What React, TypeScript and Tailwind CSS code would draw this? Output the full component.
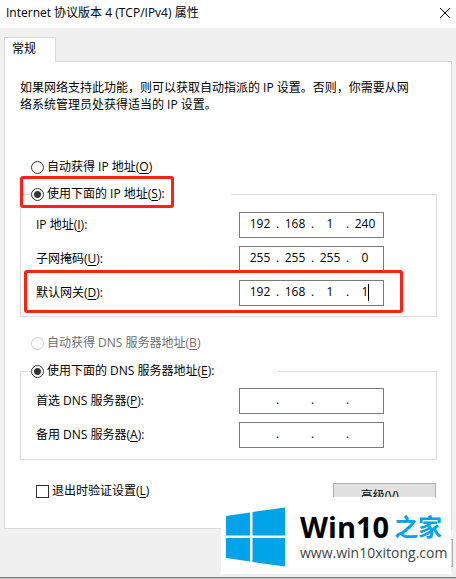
import { useState } from 'react'

const dialogFont = "font-['Open_Sans','Noto_Sans_CJK_SC',sans-serif]"

function Radio({ name, label, hotkey, checked, disabled, onChange, suffix }: {
  name: string
  label: string
  hotkey: string
  checked: boolean
  disabled?: boolean
  onChange: () => void
  suffix?: string
}) {
  return (
    <label className={`flex h-4 items-center gap-[3px] ${disabled ? 'text-[#6d6d6d]' : 'text-black'}`}>
      <input
        type="radio"
        name={name}
        checked={checked}
        disabled={disabled}
        onChange={onChange}
        className="mt-px size-[13px] shrink-0 appearance-none rounded-full border border-[#333] bg-white checked:bg-[radial-gradient(circle,#333_3px,white_4px)] disabled:border-[#ccc]"
      />
      <span className="whitespace-nowrap">{label}(<u className="underline-offset-2">{hotkey}</u>){suffix}</span>
    </label>
  )
}

function IpField({ id, initial, caret }: { id: string; initial: string[]; caret?: boolean }) {
  const [octets, setOctets] = useState(initial)

  const update = (index: number, value: string) => {
    setOctets(octets.map((octet, i) => (i === index ? value : octet)))
  }

  return (
    <div className="relative flex h-[26px] w-[145px] items-center border border-[#7a7a7a] bg-white pl-[5px] pb-[2px]">
      {octets.map((octet, i) => (
        <div key={i} className="flex items-center">
          {i > 0 && <span className="w-[5px] text-center">.</span>}
          <input
            id={i === 0 ? id : undefined}
            aria-label={i === 0 ? undefined : `${id} ${i + 1}`}
            type="text"
            maxLength={3}
            value={octet}
            onChange={(e) => update(i, e.target.value)}
            className="w-[30px] bg-transparent text-center outline-none"
          />
        </div>
      ))}
      {caret && <span className="absolute top-[3px] left-32 h-[17px] w-px bg-black" />}
    </div>
  )
}

function FieldRow({ id, label, hotkey, initial, caret }: {
  id: string
  label: string
  hotkey: string
  initial: string[]
  caret?: boolean
}) {
  return (
    <div className="flex items-center">
      <label htmlFor={id} className="w-[203px] whitespace-nowrap">{label}(<u className="underline-offset-2">{hotkey}</u>):</label>
      <IpField id={id} initial={initial} caret={caret} />
    </div>
  )
}

function Logo() {
  return (
    <div className="absolute right-[5px] bottom-[5px] flex h-[77px] w-[230px] items-center gap-[15px] bg-white pt-[2px] pl-[5px]">
      <svg width="59" height="60" viewBox="0 0 59 60" fill="#00a2e8">
        <path d="M0 9L24 5.500V28.500H0Z" />
        <path d="M26.500 5L59 0.500V28.500H26.500Z" />
        <path d="M0 31H24V54.500L0 51Z" />
        <path d="M26.500 31H59V59.500L26.500 55Z" />
      </svg>
      <div className="flex flex-col whitespace-nowrap">
        <div className="flex h-8 items-center gap-[5px]">
          <span className="text-[29px] leading-8 font-bold text-black">Win10</span>
          <span className="text-2xl leading-8 font-bold text-[#00a2e8]">之家</span>
        </div>
        <span className="text-sm leading-5 text-[#444]">www.win10xitong.com</span>
      </div>
    </div>
  )
}

export default function App() {
  const [ipMode, setIpMode] = useState('manual')
  const [dnsMode, setDnsMode] = useState('manual')
  const [validate, setValidate] = useState(false)

  return (
    <div className={`relative flex min-h-screen flex-col bg-[#f0f0f0] text-xs text-black ${dialogFont}`}>
      <header className="flex h-7 items-center justify-between bg-white pr-[5px] pb-[2px] pl-[6px]">
        <h1>Internet 协议版本 4 (TCP/IPv4) 属性</h1>
        <button type="button" aria-label="关闭">
          <svg width="12" height="12" viewBox="0 0 12 12" stroke="black" strokeWidth="1">
            <path d="M1 1L11 11M11 1L1 11" />
          </svg>
        </button>
      </header>

      <main className="mt-[9px] mr-1 ml-1">
        <div role="tablist" className="flex">
          <button
            type="button"
            role="tab"
            aria-selected="true"
            className="relative z-10 -mb-px h-[25px] w-[52px] border border-b-0 border-[#d9d9d9] bg-white pr-4 pb-[2px]"
          >
            <span className="whitespace-nowrap pl-1">常规</span>
          </button>
        </div>

        <section className="border border-[#d9d9d9] bg-white pt-[17px] pr-[14px] pb-[19px] pl-[15px]">
          <p className="pr-5 leading-[17px]">
            如果网络支持此功能，则可以获取自动指派的 IP 设置。否则，你需要从网络系统管理员处获得适当的 IP 设置。
          </p>

          <div className="mt-[46px] pl-[11px]">
            <Radio name="ip" label="自动获得 IP 地址" hotkey="O" checked={ipMode === 'auto'} onChange={() => setIpMode('auto')} />
          </div>

          <fieldset className="relative mt-[11px] border border-[#dcdcdc] pb-[10px] pl-[15px]">
            <legend className="-ml-[5px] w-[200px]">
              <Radio name="ip" label="使用下面的 IP 地址" hotkey="S" suffix=":" checked={ipMode === 'manual'} onChange={() => setIpMode('manual')} />
            </legend>
            <div className="flex flex-col gap-2 pt-[10px]">
              <FieldRow id="ip-address" label="IP 地址" hotkey="I" initial={['192', '168', '1', '240']} />
              <FieldRow id="subnet-mask" label="子网掩码" hotkey="U" initial={['255', '255', '255', '0']} />
              <FieldRow id="gateway" label="默认网关" hotkey="D" initial={['192', '168', '1', '1']} caret />
            </div>
            <span className="pointer-events-none absolute -top-[26px] -left-px h-8 w-[154px] rounded-[3px] border-3 border-[#ff2213]" />
            <span className="pointer-events-none absolute right-[33px] bottom-[3px] left-[3px] h-[43px] rounded-[3px] border-3 border-[#ff2213]" />
          </fieldset>

          <div className="mt-[18px] pl-[11px]">
            <Radio name="dns" label="自动获得 DNS 服务器地址" hotkey="B" disabled checked={dnsMode === 'auto'} onChange={() => setDnsMode('auto')} />
          </div>

          <fieldset className="mt-3 border border-[#dcdcdc] pb-[11px] pl-[15px]">
            <legend className="-ml-[5px] w-[247px]">
              <Radio name="dns" label="使用下面的 DNS 服务器地址" hotkey="E" suffix=":" checked={dnsMode === 'manual'} onChange={() => setDnsMode('manual')} />
            </legend>
            <div className="flex flex-col gap-2 pt-[9px]">
              <FieldRow id="preferred-dns" label="首选 DNS 服务器" hotkey="P" initial={['', '', '', '']} />
              <FieldRow id="alternate-dns" label="备用 DNS 服务器" hotkey="A" initial={['', '', '', '']} />
            </div>
          </fieldset>

          <div className="mt-[23px] flex items-start justify-between pr-px pl-4">
            <label className="flex items-center gap-[3px]">
              <input
                type="checkbox"
                checked={validate}
                onChange={(e) => setValidate(e.target.checked)}
                className="size-[13px] appearance-none border border-[#333] bg-white checked:bg-[#333]"
              />
              <span>退出时验证设置(<u className="underline-offset-2">L</u>)</span>
            </label>
            <button type="button" className="h-[26px] w-[103px] border border-[#adadad] bg-[#e1e1e1]">
              高级(<u className="underline-offset-2">V</u>)...
            </button>
          </div>
        </section>
      </main>

      <footer className="flex grow items-start justify-end border-b border-[#777] pt-[10px] pr-[3px]">
        <button type="button" aria-label="取消" className="h-7 w-[75px] border border-[#adadad] bg-[#e1e1e1]" />
      </footer>
      <div className="h-px bg-[#c8c8c8]" />

      <Logo />
    </div>
  )
}
